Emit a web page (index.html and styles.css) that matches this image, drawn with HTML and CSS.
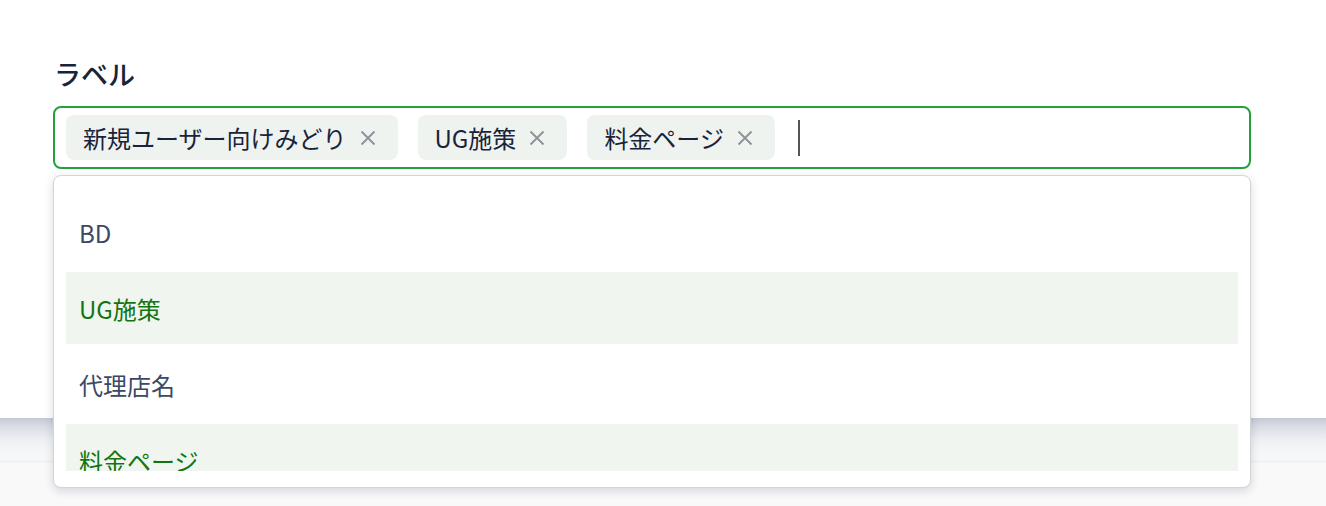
FILE: index.html
```html
<!DOCTYPE html>
<html lang="ja">
<head>
<meta charset="utf-8">
<link rel="stylesheet" href="styles.css">
</head>
<body>
<div class="page">
  <section class="panel">
    <div class="field-group">
      <div class="label">ラベル</div>
      <div class="field">
        <span class="chip">新規ユーザー向けみどり<svg class="x" viewBox="0 0 20 20"><path d="M3.5 3.5 L16.5 16.5 M16.5 3.5 L3.5 16.5"/></svg></span>
        <span class="chip">UG施策<svg class="x" viewBox="0 0 20 20"><path d="M3.5 3.5 L16.5 16.5 M16.5 3.5 L3.5 16.5"/></svg></span>
        <span class="chip">料金ページ<svg class="x" viewBox="0 0 20 20"><path d="M3.5 3.5 L16.5 16.5 M16.5 3.5 L3.5 16.5"/></svg></span>
        <span class="caret"></span>
      </div>
    </div>
  </section>
  <footer class="footer"></footer>
  <div class="menu">
    <ul class="list">
      <li class="item">BD</li>
      <li class="item selected">UG施策</li>
      <li class="item">代理店名</li>
      <li class="item selected">料金ページ</li>
    </ul>
  </div>
</div>
</body>
</html>
```

FILE: styles.css
```css
* { box-sizing: border-box; }
html, body { margin: 0; padding: 0; }
body {
  font-family: "Noto Sans CJK JP", "Noto Sans", sans-serif;
  color: #1c2a44;
  background: #fff;
  width: 1326px;
  height: 506px;
  overflow: hidden;
}
.page { position: relative; height: 506px; }
.panel {
  height: 418px;
  background: #fff;
  padding: 55px 75px 0 53px;
}
.footer {
  height: 88px;
  background: linear-gradient(#c3c8d4 0px, #d9dce4 8px, #eef0f3 22px, #f6f7f8 34px, #f7f7f8 43px, #ececee 43px, #f9f9fa 45px);
}
.label {
  font-size: 27px;
  font-weight: 500;
  line-height: 38px;
  color: #17243a;
  margin-left: 1px;
  margin-bottom: 13px;
}
.field {
  height: 63px;
  border: 2px solid #22a23a;
  border-radius: 8px;
  padding: 7px 11px;
  display: flex;
  align-items: center;
  gap: 20px;
}
.chip {
  height: 45px;
  display: inline-flex;
  align-items: center;
  background: #eff3ef;
  border-radius: 8px;
  padding: 0 20px 0 17px;
  font-size: 24px;
  color: #18243c;
  white-space: nowrap;
}
.x {
  width: 20px;
  height: 20px;
  margin-left: 11px;
  stroke: #8b9099;
  stroke-width: 1.8;
  fill: none;
}
.caret {
  width: 2px;
  height: 36px;
  background: #555;
  margin-left: 3px;
}
.menu {
  position: absolute;
  top: 175px;
  left: 53px;
  width: 1198px;
  height: 313px;
  background: #fff;
  border: 1px solid #d2d4d8;
  border-radius: 8px;
  box-shadow: 0 3px 10px rgba(20, 30, 50, 0.16);
  padding: 11px 12px;
}
.list {
  list-style: none;
  margin: 0;
  padding: 9px 0 0;
  height: 284px;
  overflow: hidden;
}
.item {
  height: 72px;
  margin-bottom: 4px;
  padding: 0 13px;
  display: flex;
  align-items: center;
  font-size: 24px;
  color: #3b4866;
}
.item.selected {
  background: #f0f5f0;
  color: #117511;
}
```
